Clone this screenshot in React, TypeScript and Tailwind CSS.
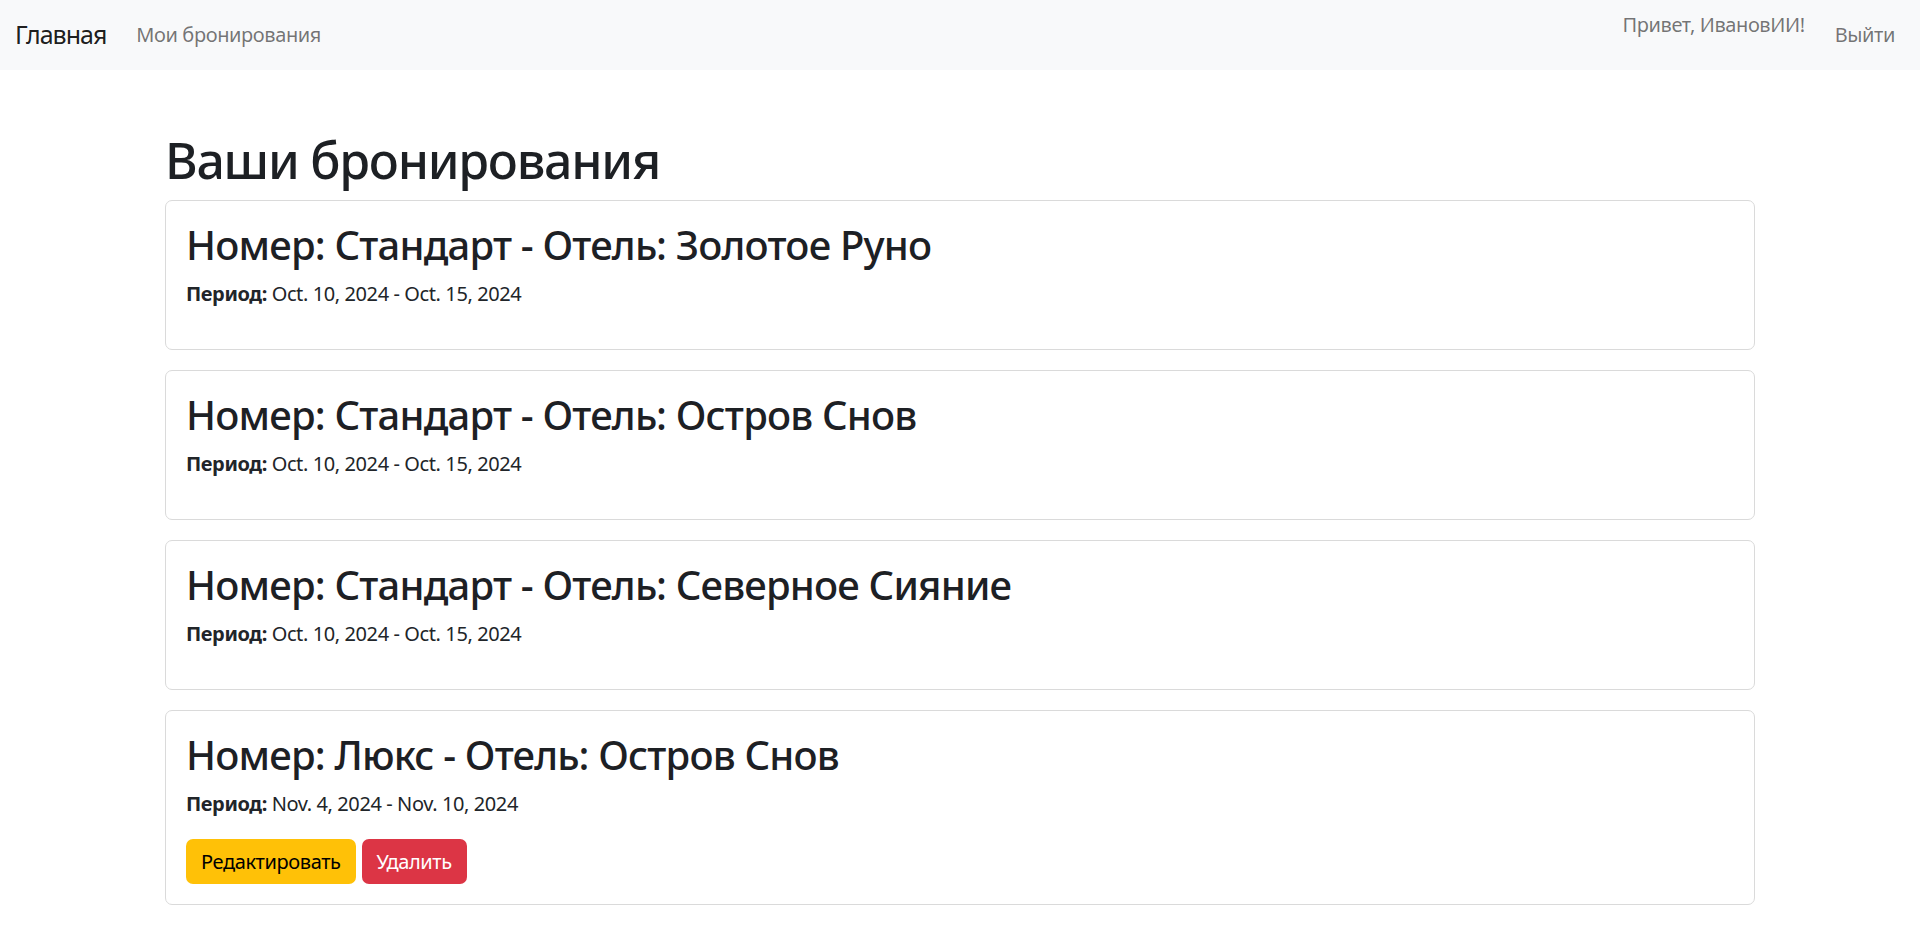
import React from "react";

const bookings = [
  { room: "Стандарт", hotel: "Золотое Руно", period: "Oct. 10, 2024 - Oct. 15, 2024", actions: false },
  { room: "Стандарт", hotel: "Остров Снов", period: "Oct. 10, 2024 - Oct. 15, 2024", actions: false },
  { room: "Стандарт", hotel: "Северное Сияние", period: "Oct. 10, 2024 - Oct. 15, 2024", actions: false },
  { room: "Люкс", hotel: "Остров Снов", period: "Nov. 4, 2024 - Nov. 10, 2024", actions: true },
];

export default function App() {
  return (
    <div className="min-h-[927px] bg-white text-[#212529] font-['Noto_Sans',sans-serif] text-[20px] leading-[1.5] tracking-[-0.02em]">
      <nav className="flex h-[70px] items-center bg-[#f8f9fa] px-[15px]">
        <a className="mr-[20px] text-[25px] leading-[37.5px] tracking-[-0.04em] text-[rgba(0,0,0,0.9)]">Главная</a>
        <a className="px-[10px] py-[10px] leading-[30px] text-[rgba(0,0,0,0.55)]">Мои бронирования</a>
        <div className="ml-auto flex h-full">
          <span className="mr-[20px] pt-[10px] leading-[30px] text-[rgba(0,0,0,0.55)]">Привет, ИвановИИ!</span>
          <a className="self-center px-[10px] py-[10px] leading-[30px] text-[rgba(0,0,0,0.55)]">Выйти</a>
        </div>
      </nav>
      <main className="mx-[165px] mt-[60px]">
        <h1 className="mb-[10px] text-[50px] font-medium leading-[60px] tracking-[-0.025em] text-[#1d2024]">Ваши бронирования</h1>
        {bookings.map((b, i) => (
          <div key={i} className="mb-[20px] rounded-[7px] border border-[#dadada] p-[20px]">
            <h2 className="mb-[10px] text-[40px] font-medium leading-[48px] tracking-[-0.02em] text-[#1d2024]">
              Номер: {b.room} - Отель: {b.hotel}
            </h2>
            <p className="mb-[20px] leading-[30px]">
              <strong className="font-bold">Период:</strong> {b.period}
            </p>
            {b.actions && (
              <div className="flex gap-[6px]">
                <button className="h-[45px] rounded-[7px] bg-[#ffc107] px-[15px] text-black">Редактировать</button>
                <button className="h-[45px] rounded-[7px] bg-[#dc3545] px-[15px] text-white">Удалить</button>
              </div>
            )}
          </div>
        ))}
      </main>
    </div>
  );
}
